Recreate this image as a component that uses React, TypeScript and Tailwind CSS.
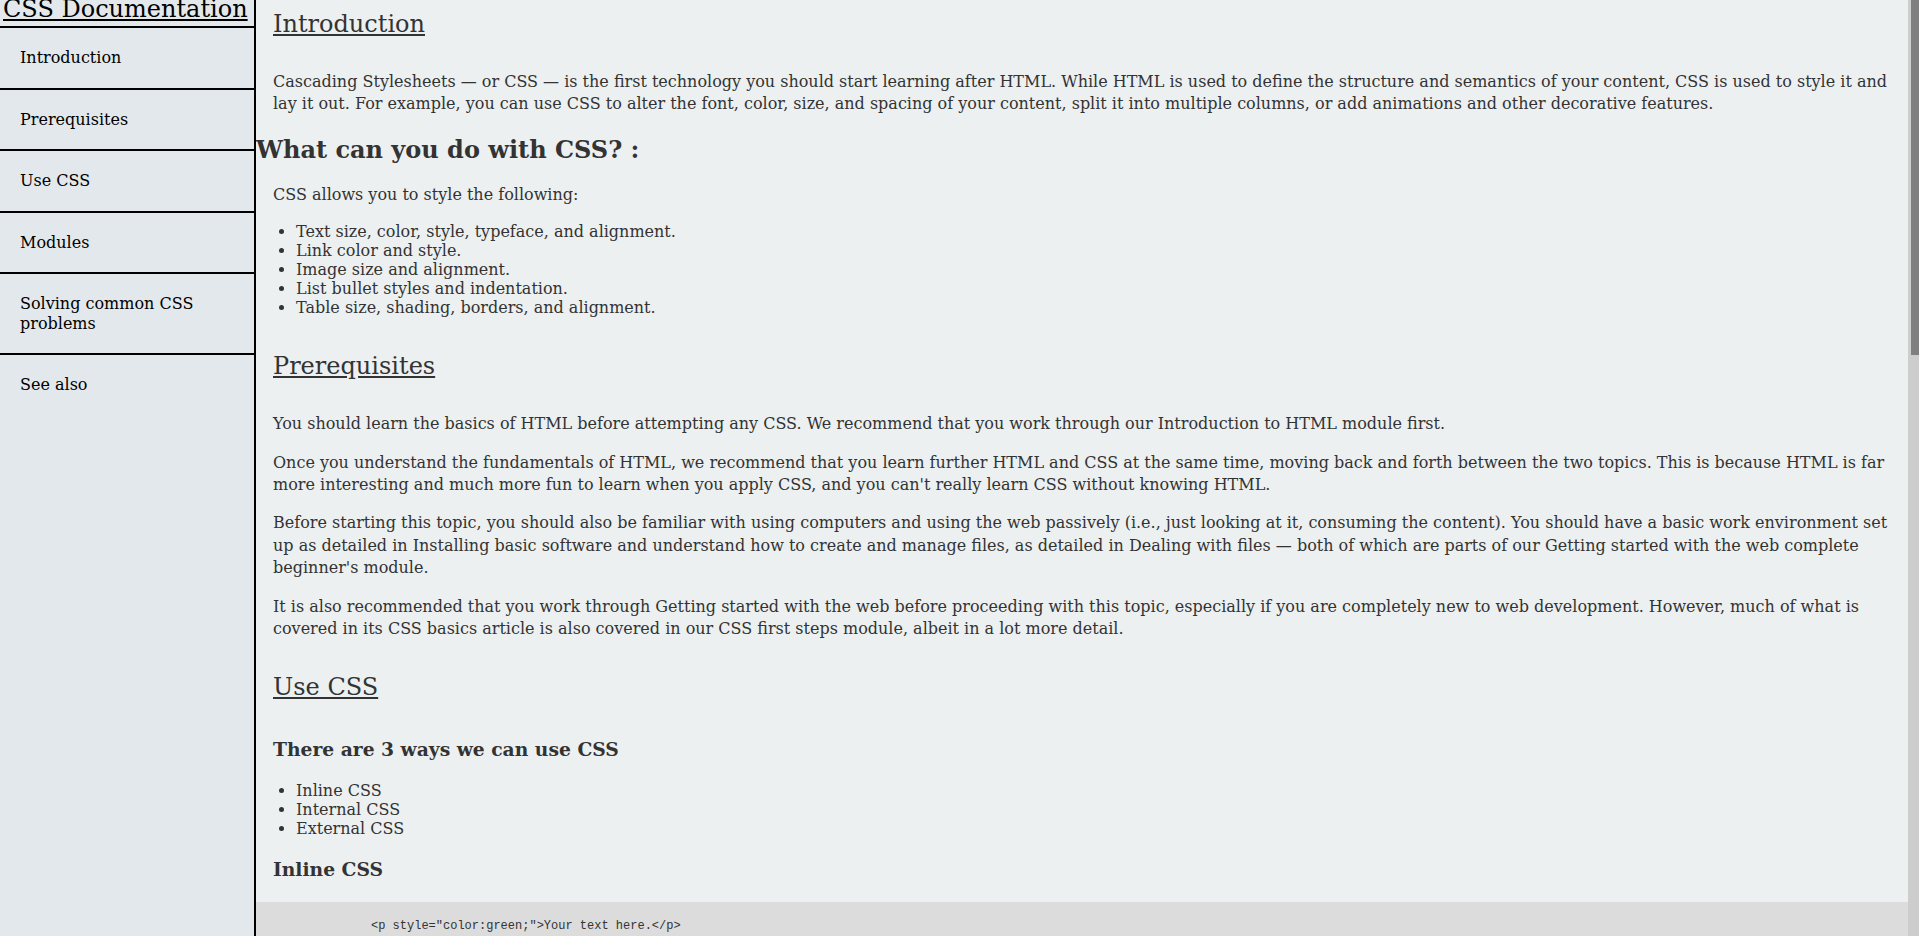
const navLinks = [
  'Introduction',
  'Prerequisites',
  'Use CSS',
  'Modules',
  'Solving common CSS problems',
  'See also',
];

const styleList = [
  'Text size, color, style, typeface, and alignment.',
  'Link color and style.',
  'Image size and alignment.',
  'List bullet styles and indentation.',
  'Table size, shading, borders, and alignment.',
];

const modules = [
  {
    title: 'CSS first steps',
    text: 'CSS (Cascading Style Sheets) is used to style and layout web pages — for example, to alter the font, color, size, and spacing of your content, split it into multiple columns, or add animations and other decorative features. This module provides a gentle beginning to your path towards CSS mastery with the basics of how it works, what the syntax looks like, and how you can start using it to add styling to HTML.',
  },
  {
    title: 'CSS building blocks',
    text: 'This module carries on where CSS first steps left off — now you\'ve gained familiarity with the language and its syntax, and got some basic experience with using it, it\'s time to dive a bit deeper. This module looks at the cascade and inheritance, all the selector types we have available, units, sizing, styling backgrounds and borders, debugging, and lots more.',
  },
  {
    title: 'Styling text',
    text: 'With the basics of the CSS language covered, the next CSS topic for you to concentrate on is styling text — one of the most common things you\'ll do with CSS. Here we look at text styling fundamentals, including setting font, boldness, italics, line and letter spacing, drop shadows, and other text features.',
  },
  {
    title: 'CSS layout',
    text: 'At this point we\'ve already looked at CSS fundamentals, how to style text, and how to style and manipulate the boxes that your content sits inside. Now it\'s time to look at how to place your boxes in the right place in relation to the viewport, and one another.',
  },
];

const problems = [
  'Styling boxes',
  'Backgrounds and borders',
  'Handling different text directions',
  'Overflowing content',
  'Values and units',
  'Sizing items in CSS',
  'Images, media, and form elements',
  'Styling tables',
  'Debugging CSS',
  'Organizing your CSS',
];

const seeAlso = [
  'CSS on MDN',
  'The CSS Reference',
  'CSS Tutorials on W3Schools',
  'The CSS Cookbook',
];

function SectionHeader({ children, className }: { children: string; className: string }) {
  return <header className={`text-[24px] leading-[28px] underline ${className}`}>{children}</header>;
}

function Para({ children, className = 'mt-4' }: { children: React.ReactNode; className?: string }) {
  return <p className={`mx-[17px] leading-[1.4] ${className}`}>{children}</p>;
}

function CodeBlock({ code, className }: { code: string; className: string }) {
  return (
    <pre
      className={`bg-[#dcdcdc] pl-[115px] pt-[16px] pb-[16px] font-['DejaVu_Sans_Mono',monospace] text-[12px] leading-[14px] text-[#333] ${className}`}
    >
      <code>{code}</code>
    </pre>
  );
}

export default function App() {
  return (
    <div className="flex h-screen w-full overflow-hidden font-['DejaVu_Serif',serif] text-[16px]">
      <nav className="flex h-screen w-[256px] shrink-0 flex-col border-r-2 border-black bg-[#e3e8ec] text-black">
        <header className="border-b-2 border-black pb-[8px] pl-[3px] text-[24px] leading-[18px] underline">
          CSS Documentation
        </header>
        {navLinks.map((link, i) => (
          <a
            key={link}
            href={`#${link.replace(/ /g, '_')}`}
            className={`block px-5 py-5 leading-[19.5px] ${i < navLinks.length - 1 ? 'border-b-2 border-black' : ''}`}
          >
            {link}
          </a>
        ))}
      </nav>

      <div className="flex h-screen flex-1 bg-[#ecf0f1]">
        <main id="main-doc" className="h-screen flex-1 overflow-hidden text-[#333]">
          <div className="flex flex-col pb-[40px]">
            <section id="Introduction" className="flex flex-col">
              <SectionHeader className="mx-[17px] mt-[10px]">Introduction</SectionHeader>
              <Para className="mt-[33px]">
                Cascading Stylesheets — or CSS — is the first technology you should start learning after HTML. While
                HTML is used to define the structure and semantics of your content, CSS is used to style it and lay it
                out. For example, you can use CSS to alter the font, color, size, and spacing of your content, split
                it into multiple columns, or add animations and other decorative features.
              </Para>
              <h2 className="mt-[20px] text-[24px] font-bold leading-[28px]">What can you do with CSS? :</h2>
              <Para className="mt-[20px]">CSS allows you to style the following:</Para>
              <ul className="mt-[16px] list-disc pl-10 leading-[19px]">
                {styleList.map((item) => (
                  <li key={item}>{item}</li>
                ))}
              </ul>
            </section>

            <section id="Prerequisites" className="flex flex-col">
              <SectionHeader className="mx-[17px] mt-[35px]">Prerequisites</SectionHeader>
              <Para className="mt-[33px]">
                You should learn the basics of HTML before attempting any CSS. We recommend that you work through our
                Introduction to HTML module first.
              </Para>
              <Para>
                Once you understand the fundamentals of HTML, we recommend that you learn further HTML and CSS at the
                same time, moving back and forth between the two topics. This is because HTML is far more interesting
                and much more fun to learn when you apply CSS, and you can't really learn CSS without knowing HTML.
              </Para>
              <Para>
                Before starting this topic, you should also be familiar with using computers and using the web
                passively (i.e., just looking at it, consuming the content). You should have a basic work environment
                set up as detailed in Installing basic software and understand how to create and manage files, as
                detailed in Dealing with files — both of which are parts of our Getting started with the web complete
                beginner's module.
              </Para>
              <Para>
                It is also recommended that you work through Getting started with the web before proceeding with this
                topic, especially if you are completely new to web development. However, much of what is covered in
                its CSS basics article is also covered in our CSS first steps module, albeit in a lot more detail.
              </Para>
            </section>

            <section id="Use_CSS" className="flex flex-col">
              <SectionHeader className="mx-[17px] mt-[33px]">Use CSS</SectionHeader>
              <h3 className="mx-[17px] mt-[38px] text-[18.72px] font-bold leading-[21px]">
                There are 3 ways we can use CSS
              </h3>
              <ul className="mt-[21px] list-disc pl-10 leading-[19px]">
                <li>Inline CSS</li>
                <li>Internal CSS</li>
                <li>External CSS</li>
              </ul>
              <h3 className="mx-[17px] mt-[21px] text-[18.72px] font-bold leading-[21px]">Inline CSS</h3>
              <CodeBlock className="mt-[22px]" code={'<p style="color:green;">Your text here.</p>'} />
              <h3 className="mx-[17px] mt-[20px] text-[18.72px] font-bold leading-[21px]">Internal CSS</h3>
              <CodeBlock
                className="mt-[23px]"
                code={'<head>\n  <style>\n    p {\n      color: green;\n    }\n  </style>\n</head>'}
              />
              <h3 className="mx-[17px] mt-[20px] text-[18.72px] font-bold leading-[21px]">External CSS</h3>
              <Para className="mt-[20px]">
                External CSS is written in a separate file with a .css extension and linked from the head of the HTML
                document with the link element.
              </Para>
              <CodeBlock className="mt-[16px]" code={'<link rel="stylesheet" href="styles.css">'} />
            </section>

            <section id="Modules" className="flex flex-col">
              <SectionHeader className="mx-[17px] mt-[34px]">Modules</SectionHeader>
              <Para className="mt-[32px]">
                This topic contains the following modules, in a suggested order for working through them. You should
                definitely start with the first one.
              </Para>
              {modules.map((m) => (
                <div key={m.title} className="flex flex-col">
                  <h3 className="mx-[17px] mt-[20px] text-[18.72px] font-bold leading-[21px]">{m.title}</h3>
                  <Para className="mt-[18px]">{m.text}</Para>
                </div>
              ))}
            </section>

            <section id="Solving_common_CSS_problems" className="flex flex-col">
              <SectionHeader className="mx-[17px] mt-[34px]">Solving common CSS problems</SectionHeader>
              <Para className="mt-[32px]">
                Use CSS to solve common problems provides links to sections of content explaining how to use CSS to
                solve very common problems when creating a web page.
              </Para>
              <ul className="mt-[16px] list-disc pl-10 leading-[19px]">
                {problems.map((item) => (
                  <li key={item}>{item}</li>
                ))}
              </ul>
            </section>

            <section id="See_also" className="flex flex-col">
              <SectionHeader className="mx-[17px] mt-[34px]">See also</SectionHeader>
              <ul className="mt-[32px] list-disc pl-10 leading-[19px]">
                {seeAlso.map((item) => (
                  <li key={item}>{item}</li>
                ))}
              </ul>
            </section>
          </div>
        </main>

        {/* page scrollbar */}
        <div className="flex h-screen w-[11px] shrink-0 flex-col bg-[#cdcdcd]">
          <div className="ml-[3px] h-[355px] bg-[#7f7f7f]" />
        </div>
      </div>
    </div>
  );
}
